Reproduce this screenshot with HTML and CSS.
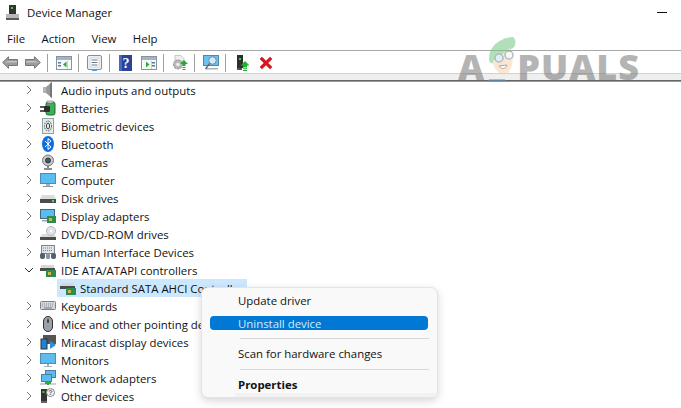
FILE: index.html
```html
<!DOCTYPE html>
<html lang="en">
<head>
<meta charset="utf-8">
<title>Device Manager</title>
<link rel="stylesheet" href="styles.css">
</head>
<body>
<div class="window">
  <header class="titlebar">
    <svg class="app-icon" width="13" height="15" viewBox="0 0 13 15"><rect x="3" y="0" width="7" height="9" fill="#333"/><rect x="5" y="2" width="2" height="2" fill="#3bd13b"/><rect x="0" y="9" width="13" height="6" fill="#b8b8b8"/><rect x="0" y="13" width="13" height="2" fill="#5a5a5a"/></svg>
    <span class="title">Device Manager</span>
    <span class="spacer"></span>
    <span class="minimize"></span>
  </header>
  <nav class="menubar">
    <span class="menu-item">File</span>
    <span class="menu-item">Action</span>
    <span class="menu-item">View</span>
    <span class="menu-item">Help</span>
  </nav>
  <div class="toolbar">
    <svg class="tool" width="16" height="13" viewBox="0 0 16 13"><path d="M.7 6.500 6.500.7V3.500H15.500V9.500H6.500V12.300Z" fill="#9c9c9c" stroke="#777"/><path d="M2.500 6.500H15V5H6Z" fill="#c2c2c2"/></svg>
    <svg class="tool tool-nav2" width="16" height="13" viewBox="0 0 16 13"><path d="M15.300 6.500 9.500.7V3.500H.5V9.500H9.500V12.300Z" fill="#9c9c9c" stroke="#777"/><path d="M13.500 6.500H1V5H10Z" fill="#c2c2c2"/></svg>
    <span class="sep sep-a"></span>
    <svg class="tool" width="16" height="14" viewBox="0 0 16 14"><rect x=".5" y=".5" width="15" height="13" fill="#f6f8fa" stroke="#8794a0"/><rect x="1" y="1" width="14" height="3" fill="#a9b3bd"/><path d="M10.500 5.500v6L7 8.500Z" fill="#2fa83a"/><path d="M2 6h3v1.500H2zM2 9h3v1.500H2z" fill="#557a9e"/><rect x="11" y="5" width="1" height="8" fill="#c6d0d8"/></svg>
    <span class="sep sep-b"></span>
    <svg class="tool" width="15" height="16" viewBox="0 0 15 16"><rect x=".5" y=".5" width="14" height="14" rx="1.500" fill="#eef0f2" stroke="#8c8c8c"/><rect x="3" y="3" width="9" height="9" fill="#fff" stroke="#b8c0c8" stroke-width=".6"/><path d="M4.500 5h6M4.500 7.500h6M4.500 10h6" stroke="#6f7a88"/><rect x="5" y="14.500" width="5" height="1.500" fill="#4ea4e2"/></svg>
    <span class="sep sep-c"></span>
    <svg class="tool" width="13" height="16" viewBox="0 0 13 16"><rect width="13" height="16" fill="#28439a"/><rect width="3" height="16" fill="#4b66bd"/><text x="7" y="13" class="help-glyph">?</text></svg>
    <svg class="tool tool-gap" width="16" height="14" viewBox="0 0 16 14"><rect x=".5" y=".5" width="15" height="13" fill="#f6f8fa" stroke="#8794a0"/><rect x="1" y="1" width="14" height="3" fill="#a9b3bd"/><path d="M5 5.500v6l3.500-3Z" fill="#2fa83a"/><path d="M11 6h3v1.500h-3zM11 9h3v1.500h-3z" fill="#557a9e"/><rect x="10" y="5" width="1" height="8" fill="#c6d0d8"/></svg>
    <span class="sep sep-d"></span>
    <svg class="tool" width="16" height="16" viewBox="0 0 16 16"><path d="M3 .5h6l3 3V6H3Z" fill="#eee" stroke="#b4b4b4" stroke-width=".7"/><circle cx="6" cy="9.500" r="4.500" fill="#b9b9b9" stroke="#8a8a8a" stroke-dasharray="2 1"/><circle cx="6" cy="9.500" r="1.800" fill="#efefef"/><path d="M12 5 8 9h2.500v2h3V9H16Z" fill="#20b030"/><path d="M10.500 12h3v1h-3zM10.500 14h3v1h-3z" fill="#20b030"/></svg>
    <span class="sep sep-d"></span>
    <svg class="tool" width="16" height="15" viewBox="0 0 16 15"><rect x=".5" y=".5" width="15" height="10" fill="#6cc1f2" stroke="#4c88aa"/><rect x="3" y="13" width="12" height="1.500" fill="#a9b3bb"/><circle cx="9.500" cy="5.500" r="3.800" fill="#cfeafa" stroke="#76868f"/><path d="M6.800 8.300 2.500 14" stroke="#666" stroke-width="1.400"/></svg>
    <span class="sep sep-e"></span>
    <svg class="tool" width="12" height="16" viewBox="0 0 12 16"><rect width="6" height="13" fill="#2e2e2e"/><rect x="2" y="3" width="2" height="2" fill="#3bd13b"/><rect y="13" width="5" height="2" fill="#555"/><path d="M8 6 3.500 10.500H6V12.500H10V10.500H12.500Z" fill="#20b030"/><path d="M6 13.300h4v1H6zM6 15h4v1H6z" fill="#20b030"/></svg>
    <svg class="tool tool-x" width="14" height="14" viewBox="0 0 14 14"><path d="M1.800 1.800 12.200 12.200M12.200 1.800 1.800 12.200" stroke="#d8141c" stroke-width="3.300"/></svg>
  </div>
  <div class="strip"></div>
  <main class="tree">
    <div class="row"><svg class="chev" width="6" height="10" viewBox="0 0 6 10"><path d="M1 1 5 5 1 9" fill="none" stroke="#777"/></svg><svg class="ic" width="16" height="16" viewBox="0 0 16 16"><rect x="3" y="5" width="3" height="6" fill="#b5b5b5"/><path d="M6 5 12 0V16L6 11Z" fill="#999"/><path d="M10 1.500V14.500L12 16V0Z" fill="#777"/></svg><span>Audio inputs and outputs</span></div>
    <div class="row"><svg class="chev" width="6" height="10" viewBox="0 0 6 10"><path d="M1 1 5 5 1 9" fill="none" stroke="#777"/></svg><svg class="ic" width="16" height="16" viewBox="0 0 16 16"><rect x="6" y="2" width="9" height="13" rx="2" fill="#3fae55" stroke="#27693a"/><path d="M7 1h6v2H7Z" fill="#ddd" stroke="#555" stroke-width=".5"/><path d="M0 7h5M0 11h5" stroke="#222" stroke-width="1.300"/><rect x="4" y="6" width="6" height="6" rx="1" fill="#2e2e2e"/></svg><span>Batteries</span></div>
    <div class="row"><svg class="chev" width="6" height="10" viewBox="0 0 6 10"><path d="M1 1 5 5 1 9" fill="none" stroke="#777"/></svg><svg class="ic" width="16" height="16" viewBox="0 0 16 16"><rect x="2.500" y=".5" width="11" height="15" fill="#e2ecea" stroke="#8fa3a0"/><ellipse cx="8" cy="8" rx="3.500" ry="5" fill="none" stroke="#555" stroke-dasharray="1.500 1"/><ellipse cx="8" cy="8" rx="1.600" ry="3" fill="none" stroke="#444"/></svg><span>Biometric devices</span></div>
    <div class="row"><svg class="chev" width="6" height="10" viewBox="0 0 6 10"><path d="M1 1 5 5 1 9" fill="none" stroke="#777"/></svg><svg class="ic" width="16" height="16" viewBox="0 0 16 16"><ellipse cx="8" cy="8" rx="6" ry="8" fill="#0a6fe0"/><path d="M5 5 11 11 8 13.500V2.500L11 5 5 11" fill="none" stroke="#fff"/></svg><span>Bluetooth</span></div>
    <div class="row"><svg class="chev" width="6" height="10" viewBox="0 0 6 10"><path d="M1 1 5 5 1 9" fill="none" stroke="#777"/></svg><svg class="ic" width="16" height="16" viewBox="0 0 16 16"><circle cx="8" cy="6.500" r="5.500" fill="#c9c9c9" stroke="#777"/><circle cx="8" cy="6.500" r="2.500" fill="#3d5a78" stroke="#333"/><path d="M8 12v2M4 15h8" stroke="#666" stroke-width="1.500"/></svg><span>Cameras</span></div>
    <div class="row"><svg class="chev" width="6" height="10" viewBox="0 0 6 10"><path d="M1 1 5 5 1 9" fill="none" stroke="#777"/></svg><svg class="ic" width="16" height="16" viewBox="0 0 16 16"><rect x=".5" y="1.500" width="15" height="10" fill="#5bbcf2" stroke="#4b8db5"/><rect x="6" y="12" width="4" height="2" fill="#a7b4bd"/><rect x="3" y="14" width="10" height="1" fill="#8a98a2"/></svg><span>Computer</span></div>
    <div class="row"><svg class="chev" width="6" height="10" viewBox="0 0 6 10"><path d="M1 1 5 5 1 9" fill="none" stroke="#777"/></svg><svg class="ic" width="16" height="16" viewBox="0 0 16 16"><path d="M2 5h12l2 4H0Z" fill="#dcdcdc"/><rect y="9" width="16" height="4" fill="#4c4c4c"/><rect x="12" y="10" width="2" height="2" fill="#5d5"/></svg><span>Disk drives</span></div>
    <div class="row"><svg class="chev" width="6" height="10" viewBox="0 0 6 10"><path d="M1 1 5 5 1 9" fill="none" stroke="#777"/></svg><svg class="ic" width="16" height="16" viewBox="0 0 16 16"><rect x=".5" y="1.500" width="14" height="9" fill="#5bbcf2" stroke="#456a80"/><rect x="7" y="8" width="9" height="7" fill="#2e8b4a"/><rect x="9" y="10" width="3" height="3" fill="#c9b458"/><rect x="2" y="12" width="5" height="1.500" fill="#98a4ad"/></svg><span>Display adapters</span></div>
    <div class="row"><svg class="chev" width="6" height="10" viewBox="0 0 6 10"><path d="M1 1 5 5 1 9" fill="none" stroke="#777"/></svg><svg class="ic" width="16" height="16" viewBox="0 0 16 16"><path d="M2 8h12l2 3H0Z" fill="#dcdcdc"/><rect y="11" width="16" height="3" fill="#4c4c4c"/><circle cx="11" cy="5" r="4.500" fill="#dfe3e6" stroke="#b3b9bd"/><circle cx="11" cy="5" r="1.200" fill="#fff"/></svg><span>DVD/CD-ROM drives</span></div>
    <div class="row"><svg class="chev" width="6" height="10" viewBox="0 0 6 10"><path d="M1 1 5 5 1 9" fill="none" stroke="#777"/></svg><svg class="ic" width="16" height="16" viewBox="0 0 16 16"><rect x="1.500" y="1.500" width="13" height="8" fill="#dfe2e6" stroke="#7d848c"/><path d="M3 4h10M3 6.500h10" stroke="#7d848c" stroke-dasharray="1 1"/><rect x="0" y="9" width="5" height="6" rx="2" fill="#555e6a"/><rect x="11" y="9" width="5" height="6" rx="2" fill="#555e6a"/><rect x="6" y="9" width="4" height="6" rx="1.500" fill="#8c96a2"/></svg><span>Human Interface Devices</span></div>
    <div class="row"><svg class="chev chev-open" width="10" height="6" viewBox="0 0 10 6"><path d="M1 1 5 5 9 1" fill="none" stroke="#333"/></svg><svg class="ic" width="16" height="16" viewBox="0 0 16 16"><path d="M1 3h13v3H1Z" fill="#d7d7d7"/><rect y="6" width="15" height="3" fill="#4c4c4c"/><rect x="6" y="8" width="10" height="7" fill="#2e8b4a"/><rect x="8" y="10" width="3" height="3" fill="#c9b458"/></svg><span>IDE ATA/ATAPI controllers</span></div>
    <div class="row row-child"><span class="selection"><svg class="ic ic-child" width="16" height="16" viewBox="0 0 16 16"><path d="M1 3h13v3H1Z" fill="#d7d7d7"/><rect y="6" width="15" height="3" fill="#4c4c4c"/><rect x="6" y="8" width="10" height="7" fill="#2e8b4a"/><rect x="8" y="10" width="3" height="3" fill="#c9b458"/></svg><span>Standard SATA AHCI Controller</span></span></div>
    <div class="row"><svg class="chev" width="6" height="10" viewBox="0 0 6 10"><path d="M1 1 5 5 1 9" fill="none" stroke="#777"/></svg><svg class="ic" width="16" height="16" viewBox="0 0 16 16"><rect x=".5" y="3.500" width="15" height="8" rx="1" fill="#d3d6da" stroke="#7d848c"/><path d="M2 6h12M2 8h12" stroke="#8b929a" stroke-dasharray="1 1"/><path d="M4 10h8" stroke="#777"/></svg><span>Keyboards</span></div>
    <div class="row"><svg class="chev" width="6" height="10" viewBox="0 0 6 10"><path d="M1 1 5 5 1 9" fill="none" stroke="#777"/></svg><svg class="ic" width="16" height="16" viewBox="0 0 16 16"><rect x="3.500" y=".5" width="9" height="15" rx="4.500" fill="#9aa1a8" stroke="#333"/><rect x="7" y="3" width="2" height="4" rx="1" fill="#444"/></svg><span>Mice and other pointing devices</span></div>
    <div class="row"><svg class="chev" width="6" height="10" viewBox="0 0 6 10"><path d="M1 1 5 5 1 9" fill="none" stroke="#777"/></svg><svg class="ic" width="16" height="16" viewBox="0 0 16 16"><rect x="3" y="1" width="13" height="9" fill="#555"/><rect x="1" y="5" width="6" height="10" fill="#1d82d8" stroke="#333"/><path d="M10 7v8l6-4Z" fill="#2b8fe0"/></svg><span>Miracast display devices</span></div>
    <div class="row"><svg class="chev" width="6" height="10" viewBox="0 0 6 10"><path d="M1 1 5 5 1 9" fill="none" stroke="#777"/></svg><svg class="ic" width="16" height="16" viewBox="0 0 16 16"><rect x=".5" y="1.500" width="15" height="10" fill="#5bbcf2" stroke="#4b8db5"/><rect x="7" y="12" width="2" height="2" fill="#a7b4bd"/><rect x="4" y="14" width="8" height="1" fill="#a7b4bd"/></svg><span>Monitors</span></div>
    <div class="row"><svg class="chev" width="6" height="10" viewBox="0 0 6 10"><path d="M1 1 5 5 1 9" fill="none" stroke="#777"/></svg><svg class="ic" width="16" height="16" viewBox="0 0 16 16"><rect x="5.500" y=".5" width="10" height="7" fill="#5bbcf2" stroke="#4b7f9d"/><rect x="1.500" y="4.500" width="10" height="7" fill="#5bbcf2" stroke="#4b7f9d"/><rect y="13" width="16" height="2" fill="#cfcfcf"/><path d="M8 11v4M5 13h6" stroke="#35a835" stroke-width="2"/></svg><span>Network adapters</span></div>
    <div class="row"><svg class="chev" width="6" height="10" viewBox="0 0 6 10"><path d="M1 1 5 5 1 9" fill="none" stroke="#777"/></svg><svg class="ic" width="16" height="16" viewBox="0 0 16 16"><rect x="1" y="1" width="6" height="12" fill="#333"/><rect x="2.500" y="3" width="2" height="2" fill="#3bd13b"/><rect x="1" y="13" width="6" height="2" fill="#666"/><circle cx="10.500" cy="4.500" r="4" fill="#f2f2f2" stroke="#888"/><text x="10.500" y="7" class="q-glyph">?</text></svg><span>Other devices</span></div>
  </main>
  <div class="watermark">
    <span class="wm-letter">A</span>
    <svg class="wm-mascot" width="34" height="45" viewBox="0 0 34 45"><path d="M6 21C6 10 16 1 30 0c3 2 3 7 1 10L10 26C7 27 6 24 6 21Z" fill="#72c67f"/><path d="M10 24 27 11c3 7 4 15 0 22-3 6-9 6-12 2-3-3-5-6-5-11Z" fill="#f6d3ad"/><circle cx="16" cy="21" r="4" fill="#c2e2f1" stroke="#6f8490" stroke-width="1.500"/><circle cx="26" cy="18" r="4" fill="#eef5f8" stroke="#6f8490" stroke-width="1.500"/><path d="M16 29c3 4 7 3 8-1Z" fill="#fff" stroke="#7a5a4a"/><path d="M6 42h16l1 3H5Z" fill="#5d9cc4"/></svg>
    <span class="wm-letter wm-word">PUALS</span>
  </div>
  <div class="context-menu">
    <div class="cm-item">Update driver</div>
    <div class="cm-item cm-active">Uninstall device</div>
    <div class="cm-sep cm-sep-first"></div>
    <div class="cm-item">Scan for hardware changes</div>
    <div class="cm-sep cm-sep-second"></div>
    <div class="cm-item cm-bold">Properties</div>
  </div>
</div>
</body>
</html>
```
FILE: styles.css
```css
* { box-sizing: border-box; }
html, body { margin: 0; padding: 0; }
body { width: 681px; height: 408px; overflow: hidden; background: #fff; font-family: "Open Sans", "Noto Sans", sans-serif; font-size: 11.4px; color: #111; }
.window { position: relative; width: 681px; height: 408px; overflow: hidden; display: flex; flex-direction: column; }
.titlebar { height: 28px; display: flex; align-items: center; padding-left: 6px; flex: none; }
.app-icon { margin-right: 8px; margin-top: -3px; }
.title { margin-top: -4px; }
.spacer { flex: 1; }
.minimize { width: 10px; height: 1px; background: #111; margin-right: 14px; margin-top: -4px; }
.menubar { height: 23px; display: flex; align-items: center; padding: 0 0 2px 7px; gap: 16.5px; flex: none; border-bottom: 1px solid #a9a9a9; }
.toolbar { height: 23px; display: flex; align-items: center; padding: 1px 0 0 2px; flex: none; border-bottom: 1px solid #d2d2d2; }
.tool { flex: none; display: block; }
.tool-nav2 { margin-left: 7px; }
.tool-gap { margin-left: 9px; }
.tool-x { margin-left: 10px; }
.sep { width: 1px; height: 18px; background: #a0a0a0; flex: none; }
.sep-a { margin: 0 8px 0 6px; }
.sep-b { margin: 0 8px 0 6px; }
.sep-c { margin: 0 9px 0 7px; }
.sep-d { margin: 0 8px 0 6px; }
.sep-e { margin: 0 11px 0 6px; }
.help-glyph { font: bold 14px "Liberation Serif", serif; fill: #fff; text-anchor: middle; }
.q-glyph { font: bold 7px "Liberation Sans", sans-serif; fill: #666; text-anchor: middle; }
.strip { height: 7px; flex: none; background: #efefef; border-bottom: 1px solid #666; box-shadow: 0 1px 0 #999; }
.tree { flex: 1; display: flex; flex-direction: column; }
.row { height: 18px; flex: none; display: flex; align-items: center; padding-left: 26px; white-space: nowrap; }
.chev { flex: none; margin-right: 8px; }
.chev-open { margin-left: -2px; margin-right: 6px; }
.ic { flex: none; margin-right: 5px; }
.row-child { padding-left: 57px; }
.selection { display: flex; align-items: center; width: 190px; height: 18px; padding-left: 3px; background: #cce8ff; }
.ic-child { margin-right: 4px; }
.watermark { position: absolute; left: 458px; top: 37px; display: flex; align-items: flex-end; height: 45px; opacity: .55; pointer-events: none; font-family: "Open Sans", sans-serif; font-weight: 800; font-size: 36px; color: #777; }
.wm-letter { line-height: 30px; }
.wm-word { margin-left: 0; letter-spacing: 1px; }
.wm-mascot { margin-left: -1px; flex: none; }
.context-menu { position: absolute; left: 201px; top: 287px; width: 237px; height: 111px; background: #f9f9f9; border: 1px solid #e4e4e4; border-radius: 7px; box-shadow: 0 3px 8px rgba(0,0,0,.16); padding: 1px 9px 0 8px; }
.context-menu::after { content: ""; position: absolute; left: 33px; right: 0; bottom: 0; height: 4px; background: #f2f2f2; border-radius: 0 0 7px 0; }
.cm-item { height: 22px; display: flex; align-items: center; padding-left: 28px; border-radius: 4px; white-space: nowrap; }
.cm-active { height: 14px; margin-top: 5px; background: #0078d4; color: #d8e9f7; }
.cm-sep { height: 1px; background: #d8d8d8; margin-left: 30px; margin-right: -1px; }
.cm-sep-first { margin-top: 8px; margin-bottom: 3px; }
.cm-sep-second { margin-top: 5px; margin-bottom: 3px; }
.cm-bold { font-weight: 700; }
```
